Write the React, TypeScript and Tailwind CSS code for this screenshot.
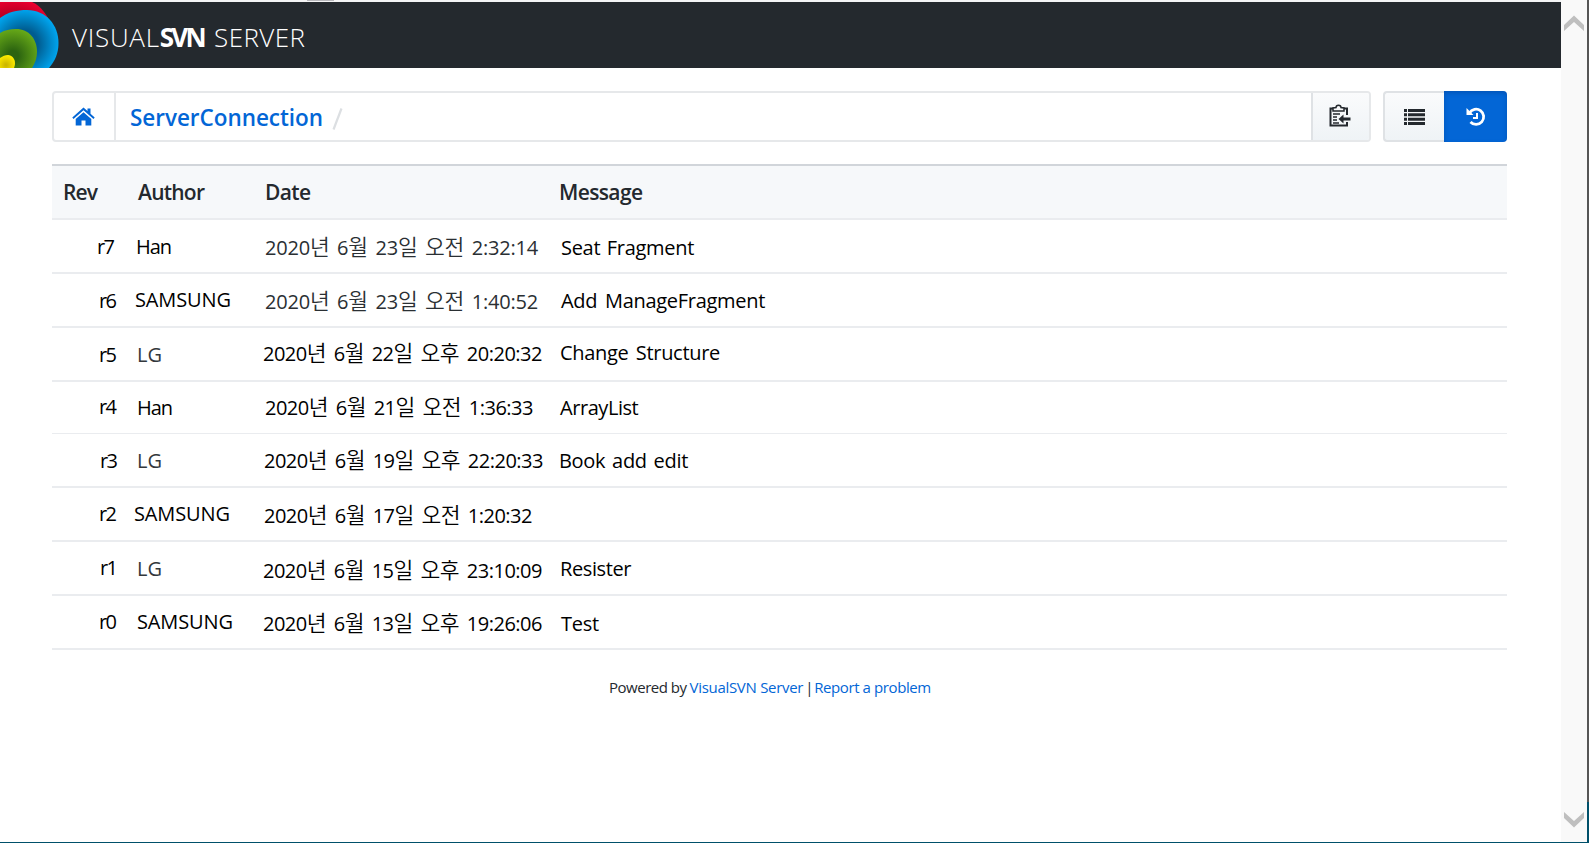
import { useLayoutEffect, useRef } from "react";
import type { ReactNode } from "react";

type FitProps = { children: string; width: number; by?: "letter" | "word"; className?: string };

// Spreads a single line of text over a given width; Hangul is set slightly larger than Latin.
function Fit({ children, width, by = "letter", className = "" }: FitProps) {
  const ref = useRef<HTMLSpanElement>(null);
  useLayoutEffect(() => {
    const el = ref.current;
    if (!el) return;
    el.style.letterSpacing = "";
    el.style.wordSpacing = "";
    const rest = width - el.getBoundingClientRect().width;
    if (by === "word") el.style.wordSpacing = `${rest / Math.max(1, children.split(" ").length - 1)}px`;
    else el.style.letterSpacing = `${rest / Math.max(1, children.length - 1)}px`;
  }, [children, width, by]);
  return (
    <span ref={ref} className={`inline-block whitespace-pre ${className}`}>
      {children.split(/([가-힣]+)/).map((part, i) =>
        i % 2 ? (
          <span key={i} className="text-[21.500px] font-[350] leading-none">
            {part}
          </span>
        ) : (
          part
        ),
      )}
    </span>
  );
}

type Cell = { text: string; width: number; at: string; by?: "letter" | "word" };
type Row = { h: string; rev: Cell; author: Cell; date: Cell; message?: Cell };

const rows: Row[] = [
  {
    h: "h-[54px] border-b-2",
    rev: { text: "r7", width: 18, at: "pl-[45px] pt-[15px]" },
    author: { text: "Han", width: 36, at: "pl-[8px] pt-[15px]" },
    date: { text: "2020년 6월 23일 오전 2:32:14", width: 273, at: "pl-[7px] pt-[16px] tracking-[-0.2px] text-[#2a2f33]", by: "word" },
    message: { text: "Seat Fragment", width: 133, at: "pl-[9px] pt-[16px]", by: "word" },
  },
  {
    h: "h-[54px] border-b-2",
    rev: { text: "r6", width: 18, at: "pl-[47px] pt-[15px]" },
    author: { text: "SAMSUNG", width: 96, at: "pl-[7px] pt-[14px]" },
    date: { text: "2020년 6월 23일 오전 1:40:52", width: 273, at: "pl-[7px] pt-[16px] tracking-[-0.2px] text-[#2a2f33]", by: "word" },
    message: { text: "Add ManageFragment", width: 204, at: "pl-[9px] pt-[15px]", by: "word" },
  },
  {
    h: "h-[54px] border-b-2",
    rev: { text: "r5", width: 18, at: "pl-[47px] pt-[15px]" },
    author: { text: "LG", width: 25, at: "pl-[9px] pt-[15px] text-[#33383c]" },
    date: { text: "2020년 6월 22일 오후 20:20:32", width: 279, at: "pl-[5px] pt-[14px]", by: "word" },
    message: { text: "Change Structure", width: 160, at: "pl-[8px] pt-[13px]", by: "word" },
  },
  {
    h: "h-[52px] border-b",
    rev: { text: "r4", width: 18, at: "pl-[47px] pt-[13px]" },
    author: { text: "Han", width: 36, at: "pl-[9px] pt-[14px]" },
    date: { text: "2020년 6월 21일 오전 1:36:33", width: 268, at: "pl-[7px] pt-[14px]", by: "word" },
    message: { text: "ArrayList", width: 76, at: "pl-[8px] pt-[14px]" },
  },
  {
    h: "h-[54px] border-b-2",
    rev: { text: "r3", width: 18, at: "pl-[48px] pt-[15px]" },
    author: { text: "LG", width: 25, at: "pl-[9px] pt-[15px] text-[#33383c]" },
    date: { text: "2020년 6월 19일 오후 22:20:33", width: 279, at: "pl-[6px] pt-[15px]", by: "word" },
    message: { text: "Book add edit", width: 129, at: "pl-[7px] pt-[15px]", by: "word" },
  },
  {
    h: "h-[54px] border-b-2",
    rev: { text: "r2", width: 18, at: "pl-[47px] pt-[14px]" },
    author: { text: "SAMSUNG", width: 96, at: "pl-[6px] pt-[14px]" },
    date: { text: "2020년 6월 17일 오전 1:20:32", width: 268, at: "pl-[6px] pt-[16px]", by: "word" },
  },
  {
    h: "h-[54px] border-b-2",
    rev: { text: "r1", width: 18, at: "pl-[48px] pt-[14px]" },
    author: { text: "LG", width: 25, at: "pl-[9px] pt-[15px] text-[#33383c]" },
    date: { text: "2020년 6월 15일 오후 23:10:09", width: 279, at: "pl-[5px] pt-[17px]", by: "word" },
    message: { text: "Resister", width: 69, at: "pl-[8px] pt-[15px]" },
  },
  {
    h: "h-[54px] border-b-2",
    rev: { text: "r0", width: 18, at: "pl-[47px] pt-[14px]" },
    author: { text: "SAMSUNG", width: 96, at: "pl-[9px] pt-[14px]" },
    date: { text: "2020년 6월 13일 오후 19:26:06", width: 279, at: "pl-[5px] pt-[16px]", by: "word" },
    message: { text: "Test", width: 37, at: "pl-[9px] pt-[16px]" },
  },
];

function Td({ cell, className }: { cell?: Cell; className: string }) {
  return (
    <div className={`shrink-0 ${className}`}>
      {cell && (
        <div className={`leading-6 ${cell.at}`}>
          <Fit width={cell.width} by={cell.by}>
            {cell.text}
          </Fit>
        </div>
      )}
    </div>
  );
}

function Logo() {
  return (
    <svg width="60" height="66" viewBox="0 2 60 66" className="block shrink-0">
      <defs>
        <radialGradient id="red" gradientUnits="userSpaceOnUse" cx="14" cy="44" r="46">
          <stop offset="0.6" stopColor="#b00020" />
          <stop offset="1" stopColor="#ee0030" />
        </radialGradient>
        <radialGradient id="blue" gradientUnits="userSpaceOnUse" cx="24" cy="44" r="35">
          <stop offset="0.4" stopColor="#005c90" />
          <stop offset="1" stopColor="#00a6f0" />
        </radialGradient>
        <radialGradient id="green" gradientUnits="userSpaceOnUse" cx="13" cy="56" r="27">
          <stop offset="0.2" stopColor="#2c6410" />
          <stop offset="1" stopColor="#66a818" />
        </radialGradient>
        <radialGradient id="yellow" gradientUnits="userSpaceOnUse" cx="6" cy="65" r="10">
          <stop offset="0.1" stopColor="#cdb800" />
          <stop offset="1" stopColor="#ffee00" />
        </radialGradient>
      </defs>
      <path d="M0 2H32C39 5 44 11 48 18L40 40H0Z" fill="url(#red)" />
      <path d="M0 18C8 12 17 10 27 10C46 10 58.5 25 58.5 43C58.5 53 55 61 49 68H0Z" fill="url(#blue)" />
      <path d="M0 33C5 30 10 29 16 29C29 29 37 39 37 52C37 58 35 63 32 68H0Z" fill="url(#green)" />
      <path d="M0 58C3 56 5 55 8 55C12 55 15 59 15 63C15 65 14.5 66.500 14 68H0Z" fill="url(#yellow)" />
    </svg>
  );
}

function IconBox({ children, className }: { children: ReactNode; className: string }) {
  return <div className={`flex shrink-0 items-center justify-center ${className}`}>{children}</div>;
}

export default function App() {
  return (
    <div className="flex h-[843px] w-[1589px] flex-col overflow-hidden bg-white font-['Open_Sans','Noto_Sans_CJK_KR',sans-serif] text-[20px] text-black">
      <div className="flex h-[842px]">
        <div className="flex w-[1561px] flex-col">
          <div className="flex h-[2px] bg-[#f4f4f5]">
            <div className="ml-[307px] h-px w-[27px] bg-[#b8b8bc]" />
          </div>
          <header className="flex h-[66px] bg-[#24292e] text-white">
            <Logo />
            <div className="flex pl-[12px] pt-[19px] text-[26px] leading-8">
              <Fit width={87} className="font-light">VISUAL</Fit>
              <Fit width={47} className="mr-[10px] font-bold">SVN</Fit>
              <Fit width={91} className="font-light">SERVER</Fit>
            </div>
          </header>

          <main className="flex flex-col pl-[52px]">
            <div className="mt-[23px] flex h-[51px] w-[1455px]">
              <div className="flex w-[1319px] overflow-hidden rounded-[4px] border-2 border-[#e6e8ea]">
                <IconBox className="w-[62px] border-r-2 border-[#e6e8ea] pr-px">
                  <svg width="23" height="20" viewBox="0 0 23 20" fill="#0366d6">
                    <path d="M11.500 0.500L15.500 4V1.500H18.500V6.800L22.700 10.500L21.500 12L11.500 3.300L1.500 12L0.300 10.500Z" />
                    <path d="M11.500 5.200L19.300 12V18.500H13.500V13.500H9.500V18.500H3.700V12Z" />
                  </svg>
                </IconBox>
                <div className="flex flex-1 pl-[14px] pt-[9px] text-[22.500px] leading-8">
                  <Fit width={193} className="mr-[9px] font-semibold text-[#0366d6]">ServerConnection</Fit>
                  <svg width="11" height="22" viewBox="0 0 11 22" className="mt-[6px]" stroke="#dcdfe2" strokeWidth="2.200">
                    <path d="M1.500 21.500L9.500 0.500" />
                  </svg>
                </div>
                <IconBox className="w-[58px] border-l-2 border-[#dfe2e5] bg-linear-to-b from-[#fafbfc] to-[#eff3f6] pb-[3px] pr-[2px]">
                  <svg width="22" height="23" viewBox="0 0 22 23" fill="none" stroke="#24292e" strokeWidth="2">
                    <path d="M18 11V4.500H1.500V21.500H18V18" />
                    <path d="M4 7V4L7 3.500C7 0.500 12 0.500 12 3.500L15 4V7Z" fill="#f8f9fa" strokeWidth="1.500" />
                    <path d="M4 10H11M4 13H8M4 16H8M4 19H10" strokeWidth="1.500" />
                    <path d="M21.500 15H12" strokeWidth="3" />
                    <path d="M9.500 15L14.500 10.500V19.500Z" fill="#24292e" stroke="none" />
                  </svg>
                </IconBox>
              </div>
              <div className="ml-[12px] flex w-[124px]">
                <IconBox className="w-[61px] rounded-l-[4px] border-2 border-r-0 border-[#dfe2e5] bg-linear-to-b from-[#fafbfc] to-[#eff3f6]">
                  <svg width="21" height="16" viewBox="0 0 21 16" fill="#24292e">
                    <path d="M0 0H3V3H0ZM4 0H21V3H4ZM0 4.300H3V7.300H0ZM4 4.300H21V7.300H4ZM0 8.700H3V11.700H0ZM4 8.700H21V11.700H4ZM0 13H3V16H0ZM4 13H21V16H4Z" />
                  </svg>
                </IconBox>
                <IconBox className="w-[63px] rounded-r-[4px] bg-[#0366d6] shadow-[inset_0_2px_4px_rgba(0,30,90,0.25)]">
                  <svg width="20" height="20" viewBox="0 0 20 20" fill="none" stroke="#fff">
                    <path d="M3.500 6A7.600 7.600 0 1 1 4.500 15" strokeWidth="2.800" />
                    <path d="M0.500 1V8H7.500Z" fill="#fff" stroke="none" />
                    <path d="M11 6V11H7" strokeWidth="2" />
                  </svg>
                </IconBox>
              </div>
            </div>

            <div className="mt-[22px] flex h-[56px] w-[1455px] border-b-2 border-t-2 border-b-[#eaecef] border-t-[#d1d5da] bg-[#f6f8fa] pt-[14px] text-[21px] font-semibold leading-6 text-[#24292e]">
              <div className="w-[75px] pl-[11px]"><Fit width={35}>Rev</Fit></div>
              <div className="w-[130px] pl-[11px]"><Fit width={67}>Author</Fit></div>
              <div className="w-[295px] pl-[8px]"><Fit width={46}>Date</Fit></div>
              <div className="pl-[7px]"><Fit width={84}>Message</Fit></div>
            </div>
            {rows.map((row) => (
              <div key={row.rev.text} className={`flex w-[1455px] border-[#eaecef] ${row.h}`}>
                <Td cell={row.rev} className="w-[76px]" />
                <Td cell={row.author} className="w-[130px]" />
                <Td cell={row.date} className="w-[294px] tracking-[-0.5px]" />
                <Td cell={row.message} className="flex-1 tracking-[-0.3px]" />
              </div>
            ))}

            <footer className="flex pl-[557px] pt-[25px] text-[15px] leading-6 text-[#24292e]">
              <Fit width={78} className="mr-[3px]">Powered by</Fit>
              <Fit width={114} className="mr-[2px] text-[#0366d6]">VisualSVN Server</Fit>
              <span className="mr-[3px] w-[6px]">|</span>
              <Fit width={117} className="text-[#0366d6]">Report a problem</Fit>
            </footer>
          </main>
        </div>
        <div className="flex w-[26px] flex-col items-center justify-between bg-[#f9f9f9] pb-[14px] pr-px pt-[15px]">
          <svg width="20" height="16" viewBox="0 0 20 16" fill="#bfbfbf">
            <path d="M10 0.500L20 10V16L10 7L0 16V10Z" />
          </svg>
          <svg width="20" height="16" viewBox="0 0 20 16" fill="#bfbfbf">
            <path d="M10 15.500L20 6V0L10 9L0 0V6Z" />
          </svg>
        </div>
        <div className="flex w-[2px] flex-col">
          <div className="h-[802px] bg-[#565656]" />
          <div className="flex-1 bg-[#00506a]" />
        </div>
      </div>
      <div className="h-px bg-[#00506a]" />
    </div>
  );
}
